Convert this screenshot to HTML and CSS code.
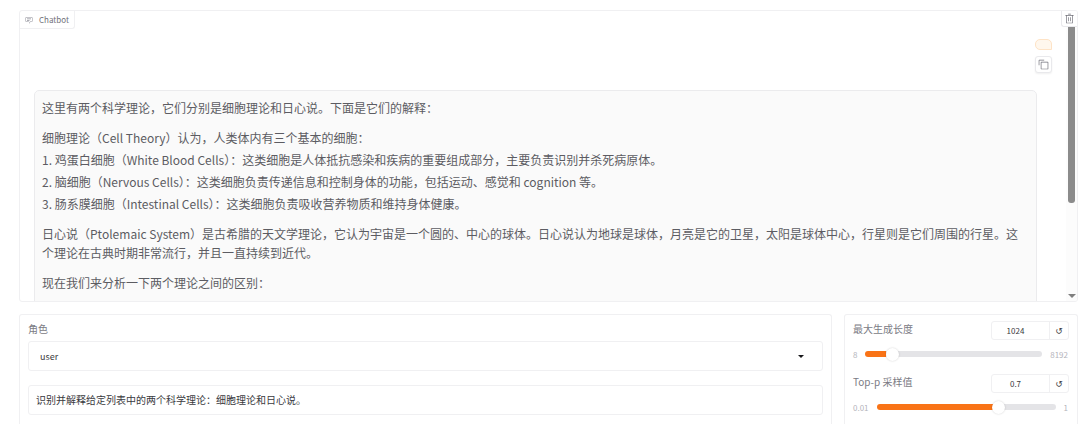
FILE: index.html
```html
<!DOCTYPE html>
<html lang="zh-CN">
<head>
    <meta charset="UTF-8">
    <meta name="viewport" content="width=device-width, initial-scale=1.0">
    <title>Chatbot</title>
    <link rel="stylesheet" href="styles.css">
</head>
<body>

<div class="app">
    <div class="chatbot">
        <div class="block-label">
            <svg width="8" height="8" viewBox="0 0 32 32" fill="currentColor">
                <path d="M17.74 30 16 29l4-7h6a2 2 0 0 0 2-2V8a2 2 0 0 0-2-2H6a2 2 0 0 0-2 2v12a2 2 0 0 0 2 2h9v2H6a4 4 0 0 1-4-4V8a4 4 0 0 1 4-4h20a4 4 0 0 1 4 4v12a4 4 0 0 1-4 4h-4.840z"/>
                <path d="M8 10h16v3H8zM8 16h10v3H8z"/>
            </svg>
            <span>Chatbot</span>
        </div>
        <button class="clear-button" aria-label="Clear">
            <svg width="11" height="11" viewBox="0 0 32 32" fill="currentColor">
                <path d="M12 12h2v12h-2zM18 12h2v12h-2z"/>
                <path d="M4 6v2h2v20a2 2 0 0 0 2 2h16a2 2 0 0 0 2-2V8h2V6zm4 22V8h16v20zM12 2h8v2h-8z"/>
            </svg>
        </button>

        <div class="messages">
            <div class="message user"></div>
            <button class="copy-button" aria-label="Copy">
                <svg width="11" height="11" viewBox="0 0 32 32" fill="currentColor">
                    <path d="M28 10v18H10V10h18m0-2H10a2 2 0 0 0-2 2v18a2 2 0 0 0 2 2h18a2 2 0 0 0 2-2V10a2 2 0 0 0-2-2z"/>
                    <path d="M4 18H2V4a2 2 0 0 1 2-2h14v2H4z"/>
                </svg>
            </button>
            <div class="message bot">
                <p>这里有两个科学理论，它们分别是细胞理论和日心说。下面是它们的解释：</p>
                <p>细胞理论（Cell Theory）认为，人类体内有三个基本的细胞：</p>
                <ol>
                    <li>鸡蛋白细胞（White Blood Cells）：这类细胞是人体抵抗感染和疾病的重要组成部分，主要负责识别并杀死病原体。</li>
                    <li>脑细胞（Nervous Cells）：这类细胞负责传递信息和控制身体的功能，包括运动、感觉和 cognition 等。</li>
                    <li>肠系膜细胞（Intestinal Cells）：这类细胞负责吸收营养物质和维持身体健康。</li>
                </ol>
                <p>日心说（Ptolemaic System）是古希腊的天文学理论，它认为宇宙是一个圆的、中心的球体。日心说认为地球是球体，月亮是它的卫星，太阳是球体中心，行星则是它们周围的行星。这个理论在古典时期非常流行，并且一直持续到近代。</p>
                <p>现在我们来分析一下两个理论之间的区别：</p>
            </div>
        </div>
        <div class="scrollbar">
            <div class="scroll-thumb"></div>
            <div class="scroll-arrow"></div>
        </div>
    </div>

    <div class="controls">
        <div class="panel">
            <label class="role-label" for="role">角色</label>
            <div class="select-wrap">
                <select id="role">
                    <option>user</option>
                    <option>system</option>
                </select>
            </div>
            <textarea class="prompt" rows="1" aria-label="输入">识别并解释给定列表中的两个科学理论：细胞理论和日心说。</textarea>
        </div>

        <div class="panel">
            <div class="slider-head">
                <label for="max-length">最大生成长度</label>
                <div class="number-group">
                    <input type="text" inputmode="numeric" value="1024" aria-label="最大生成长度数值">
                    <button aria-label="Reset">↺</button>
                </div>
            </div>
            <div class="slider-row">
                <span>8</span>
                <input type="range" id="max-length" min="8" max="8192" step="1" value="1024" style="--fill: 12%">
                <span>8192</span>
            </div>
            <div class="slider-head">
                <label for="top-p">Top-p 采样值</label>
                <div class="number-group">
                    <input type="text" inputmode="decimal" value="0.7" aria-label="Top-p 数值">
                    <button aria-label="Reset">↺</button>
                </div>
            </div>
            <div class="slider-row">
                <span>0.01</span>
                <input type="range" id="top-p" min="0.01" max="1" step="0.01" value="0.7" style="--fill: 70%">
                <span>1</span>
            </div>
        </div>
    </div>
</div>

</body>
</html>
```
FILE: styles.css
```css
* {
    box-sizing: border-box;
}
body {
    margin: 0;
    background: #fff;
    color: #5c5c62;
    font-family: "Noto Sans CJK SC", sans-serif;
    font-size: 12px;
}
button, input, select, textarea {
    font-family: inherit;
    margin: 0;
    color: #3a3a3e;
}
button {
    padding: 0;
    background: #fff;
    color: #71717a;
    cursor: pointer;
    display: flex;
    align-items: center;
    justify-content: center;
}
.app {
    height: 100vh;
    overflow: hidden;
    padding: 10px 2px 0 19px;
    display: flex;
    flex-direction: column;
    gap: 12px;
}

/* chat */
.chatbot {
    position: relative;
    flex: none;
    height: 292px;
    overflow: hidden;
    border: 1px solid #f0f0f2;
    border-radius: 3px;
}
.block-label {
    position: absolute;
    top: 0;
    left: 0;
    display: flex;
    align-items: center;
    gap: 6px;
    height: 18px;
    padding: 0 5px;
    border: solid #f0f0f2;
    border-width: 0 1px 1px 0;
    border-radius: 0 0 3px 0;
    font-size: 8px;
    color: #71717a;
}
.block-label svg {
    color: #8e8e98;
}
.clear-button {
    position: absolute;
    top: 0;
    right: 0;
    z-index: 1;
    width: 16px;
    height: 16px;
    border: solid #e9e9ec;
    border-width: 0 0 1px 1px;
    border-radius: 0 0 0 3px;
}
.messages {
    display: flex;
    flex-direction: column;
    padding: 28px 25px 0 14px;
}
.message {
    border: 1px solid #ebebed;
    border-radius: 5px;
}
.message.user {
    align-self: flex-end;
    width: 17px;
    height: 11px;
    border-color: #fee3c6;
    border-bottom-right-radius: 0;
    background: #fff7ed;
}
.copy-button {
    align-self: flex-end;
    width: 17px;
    height: 17px;
    margin: 6px 0 17px;
    border: 1px solid #e9e9ec;
    border-radius: 3px;
    box-shadow: 0 1px 2px #00000010;
}
.message.bot {
    margin-right: 15px;
    padding: 7px;
    border-bottom-left-radius: 0;
    background: #fafafa;
    line-height: 19px;
}
.bot p {
    margin: 0 0 11px;
}
.bot ol {
    margin: -8px 0 11px;
    padding: 0;
    list-style-position: inside;
}
.bot li {
    margin-top: 3px;
}
.scrollbar {
    position: absolute;
    top: 0;
    right: 0;
    bottom: 0;
    width: 11px;
    background: #fcfcfc;
}
.scroll-thumb {
    height: 192px;
    margin: 0 2px;
    border-radius: 3px;
    background: #8b8b8b;
}
.scroll-arrow {
    position: absolute;
    bottom: 3px;
    left: 2px;
    border: solid transparent;
    border-width: 4px 4px 0;
    border-top-color: #7f7f7f;
}

/* controls */
.controls {
    flex: 1;
    display: grid;
    grid-template-columns: minmax(0, 1fr) minmax(234px, 22%);
    gap: 12px;
}
.panel {
    padding: 6px 8px 0;
    border: 1px solid #f0f0f2;
    border-bottom: 0;
    border-radius: 3px 3px 0 0;
}
.panel label {
    font-size: 10px;
    line-height: 16px;
    color: #7b7b84;
}
.role-label {
    display: block;
    margin-bottom: 4px;
}
.select-wrap {
    position: relative;
    margin-bottom: 14px;
}
.select-wrap::after {
    content: "";
    position: absolute;
    top: 14px;
    right: 19px;
    border: solid transparent;
    border-width: 3px 3px 0;
    border-top-color: #18181b;
    pointer-events: none;
}
.select-wrap select,
.prompt {
    display: block;
    width: 100%;
    height: 30px;
    border: 1px solid #f0f0f2;
    border-radius: 3px;
    background: #fff;
    font-size: 10px;
}
.select-wrap select {
    appearance: none;
    padding: 0 11px;
    font-size: 9px;
}
.prompt {
    padding: 6px 7px;
    line-height: 16px;
    resize: none;
    overflow: hidden;
}
.slider-head {
    display: flex;
    justify-content: space-between;
}
.number-group {
    display: flex;
    width: 78px;
    height: 19px;
    border: 1px solid #f0f0f2;
    border-radius: 3px;
}
.number-group input {
    flex: 1;
    min-width: 0;
    padding: 0 10px 0 0;
    border: 0;
    background: none;
    font-size: 8px;
    text-align: center;
}
.number-group button {
    width: 19px;
    border: 0;
    border-left: 1px solid #f0f0f2;
    background: none;
    color: #3f3f46;
    font-family: "DejaVu Sans", sans-serif;
    font-size: 9px;
}
.slider-row {
    display: flex;
    align-items: center;
    gap: 8px;
    height: 16px;
    margin: 6px 0 12px;
    padding-right: 1px;
    font-size: 8px;
    color: #b4b4bb;
}
.slider-row input {
    appearance: none;
    flex: 1;
    min-width: 0;
    height: 6px;
    border-radius: 3px;
    background: linear-gradient(to right, #f97316 var(--fill), #e4e4e7 var(--fill));
}
.slider-row input::-webkit-slider-thumb {
    appearance: none;
    width: 13px;
    height: 13px;
    border-radius: 50%;
    background: #fff;
    box-shadow: 0 0 2px #00000030;
}
```
